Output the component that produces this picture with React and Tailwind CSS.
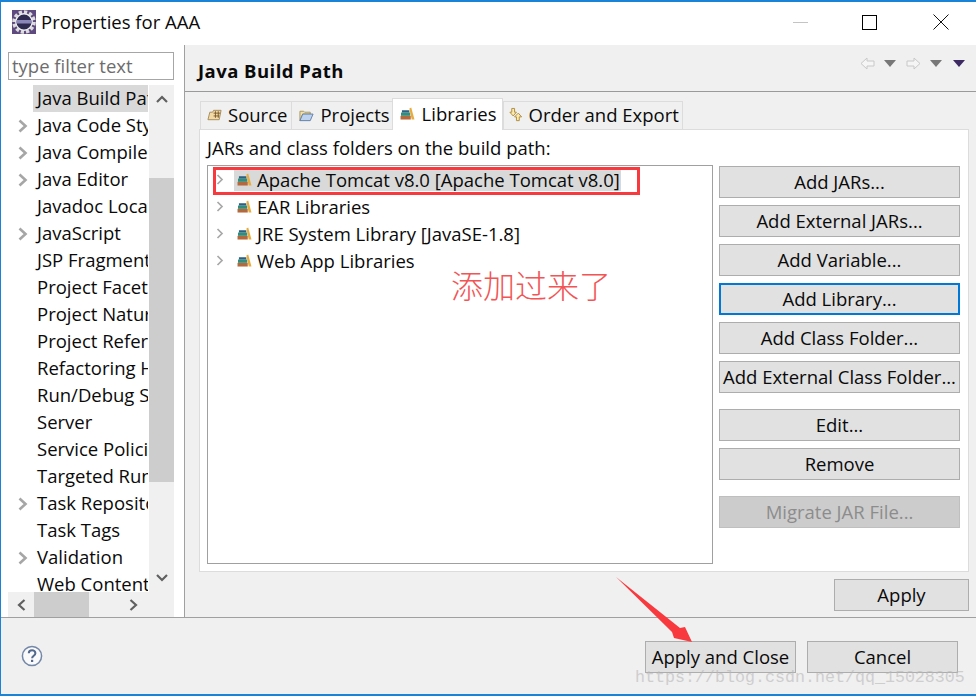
import React from "react";

const treeItems = [
  ["Java Build Path", false, true],
  ["Java Code Style", true],
  ["Java Compiler", true],
  ["Java Editor", true],
  ["Javadoc Location", false],
  ["JavaScript", true],
  ["JSP Fragment", false],
  ["Project Facets", false],
  ["Project Natures", false],
  ["Project References", false],
  ["Refactoring History", false],
  ["Run/Debug Settings", false],
  ["Server", false],
  ["Service Policies", false],
  ["Targeted Runtimes", false],
  ["Task Repository", true],
  ["Task Tags", false],
  ["Validation", true],
  ["Web Content Settings", false],
];

function Chevron({ small }) {
  return small ? (
    <svg width="8" height="11" viewBox="0 0 8 11"><path d="M1.5 1l4.5 4.5L1.5 10" fill="none" stroke="#a8a8a8" strokeWidth="1.7" /></svg>
  ) : (
    <svg width="10" height="14" viewBox="0 0 10 14"><path d="M1.5 1.5L7.5 7l-6 5.5" fill="none" stroke="#a6a6a6" strokeWidth="2.6" /></svg>
  );
}

function LibIcon() {
  return (
    <svg width="15" height="13" viewBox="0 0 16 14" className="shrink-0">
      <rect x="0.5" y="9.5" width="11" height="4" fill="#b5683c" />
      <rect x="1" y="6" width="10" height="3.5" fill="#2f8f7c" />
      <rect x="2" y="3.5" width="8" height="2.5" fill="#2c5f80" />
      <path d="M10 1.5l2-1 3.5 13H12.5z" fill="#e8ac3e" />
    </svg>
  );
}

function Btn({ children, focus, disabled, className = "" }) {
  const tone = focus
    ? "bg-[#e1e1e1] border-2 border-[#0078d7] "
    : disabled
      ? "bg-[#cccccc] border border-[#bfbfbf] text-[#8c8c8c] "
      : "bg-[#e1e1e1] border border-[#adadad] ";
  return (
    <div className={"h-[32px] flex items-center justify-center pb-px " + tone + className}>
      {children}
    </div>
  );
}

function ListRow({ label, selected }) {
  return (
    <div className="h-[27px] flex items-center">
      <div className="w-[26px] shrink-0 pl-[8px] flex items-center"><Chevron small /></div>
      <div className={"flex items-center pl-[3px] pr-[1px] " + (selected ? "h-[23px] bg-[#d9d9d9]" : "h-[27px]")}>
        <LibIcon />
        <span className="ml-[5px] whitespace-nowrap">{label}</span>
      </div>
    </div>
  );
}

function Tri({ color = "#777" }) {
  return (
    <svg width="12" height="7" viewBox="0 0 12 7"><path d="M0 0h12L6 7z" fill={color} /></svg>
  );
}

export default function App() {
  return (
    <div
      className="relative w-[976px] h-[696px] overflow-hidden bg-white border-t-2 border-l border-b-2 border-[#1883d7] flex flex-col text-[18.5px] text-[#0a0a0a]"
      style={{ fontFamily: "'Open Sans','Noto Sans',sans-serif" }}
    >
      {/* Title bar */}
      <div className="h-[43px] shrink-0 flex items-center bg-white pb-[3px]">
        <svg width="24" height="24" viewBox="0 0 24 24" className="ml-[11px]">
          <rect width="24" height="24" fill="#5f4a80" />
          <circle cx="12" cy="12" r="10" fill="none" stroke="#dcdcdc" strokeWidth="3.6" strokeDasharray="3.2 2" />
          <circle cx="12" cy="12" r="8.2" fill="#2e2a50" stroke="#eeeeee" strokeWidth="1.4" />
          <rect x="4.5" y="10" width="15" height="3.5" fill="#8b86b8" />
        </svg>
        <span className="ml-[5px]">Properties for AAA</span>
        <div className="ml-auto flex items-center">
          <div className="w-[15px] h-px bg-[#c4c4c4] mr-[54px]" />
          <div className="w-[15px] h-[15px] border border-black mr-[56px]" />
          <svg width="16" height="16" viewBox="0 0 16 16" className="mr-[27px]"><path d="M.5.5l15 15M15.5.5l-15 15" stroke="#111" strokeWidth="1" fill="none" /></svg>
        </div>
      </div>

      {/* Middle */}
      <div className="flex-1 min-h-0 flex">
        {/* Left */}
        <div className="w-[184px] shrink-0 border-r border-[#a0a0a0] pl-[7px] pr-[9px] pt-[7px] flex flex-col">
          <div className="h-[28px] w-[166px] shrink-0 border border-[#a6a6a6] flex items-center pl-[3px] pb-px text-[#6d6d6d]">type filter text</div>
          <div className="mt-[5px] flex h-[507px] shrink-0">
            <div className="w-[140px] mr-px overflow-hidden">
              {treeItems.map(([label, expandable, selected]) => (
                <div key={label} className="h-[27px] flex items-center">
                  <div className="w-[25px] shrink-0 pl-[10px] flex items-center">{expandable && <Chevron />}</div>
                  <div className={"h-[27px] flex-1 flex items-center pl-[4px] pb-[2px] whitespace-nowrap overflow-hidden " + (selected ? "bg-[#d9d9d9]" : "")}>{label}</div>
                </div>
              ))}
            </div>
            <div className="w-[25px] bg-[#f0f0f0] flex flex-col items-center">
              <svg width="12" height="8" viewBox="0 0 12 8" className="mt-[10px]"><path d="M1 7l5-5 5 5" fill="none" stroke="#606060" strokeWidth="2.2" /></svg>
              <div className="mt-[75px] w-full h-[304px] bg-[#cdcdcd]" />
              <svg width="12" height="8" viewBox="0 0 12 8" className="mt-[92px]"><path d="M1 1l5 5 5-5" fill="none" stroke="#606060" strokeWidth="2.2" /></svg>
            </div>
          </div>
          <div className="h-[25px] w-[166px] shrink-0 bg-[#f0f0f0] flex items-center">
            <svg width="9" height="12" viewBox="0 0 9 12" className="ml-[9px]"><path d="M7.5 1L2 6l5.5 5" fill="none" stroke="#606060" strokeWidth="2.2" /></svg>
            <div className="ml-[8px] w-[55px] h-[25px] bg-[#cdcdcd]" />
            <svg width="9" height="12" viewBox="0 0 9 12" className="ml-[40px]"><path d="M1.5 1L7 6l-5.5 5" fill="none" stroke="#606060" strokeWidth="2.2" /></svg>
          </div>
        </div>

        {/* Right */}
        <div className="flex-1 min-w-0 bg-[#f0f0f0] flex flex-col">
          <div className="h-[47px] shrink-0 border-b border-[#9a9a9a] flex items-center pl-[13px] pr-[11px]">
            <span className="font-bold mt-[6px] tracking-[0.45px]">Java Build Path</span>
            <div className="ml-auto flex items-center -mt-[10px]">
              <svg width="15" height="13" viewBox="0 0 15 13"><path d="M7 1L1 6.5 7 12V9h7V4H7z" fill="#f5f5f5" stroke="#c8c8c8" /></svg>
              <div className="ml-[9px] flex"><Tri /></div>
              <svg width="15" height="13" viewBox="0 0 15 13" className="ml-[10px]"><path d="M8 1l6 5.5L8 12V9H1V4h7z" fill="#f5f5f5" stroke="#c8c8c8" /></svg>
              <div className="ml-[9px] flex"><Tri /></div>
              <div className="ml-[11px] flex"><Tri color="#3d2a63" /></div>
            </div>
          </div>

          <div className="flex-1 min-h-0 pl-[14px] pr-[7px] pt-[7px] flex flex-col">
            {/* Tabs */}
            <div className="flex relative z-10 h-[31px] shrink-0 pl-px">
              <div className="h-[29px] mt-[2px] pl-[6px] pr-[4px] pb-px flex items-center gap-[6px] bg-[#f0f0f0] border border-[#dcdcdc]">
                <svg width="15" height="14" viewBox="0 0 16 14"><path d="M1 12l2-8h3l1-2h8l-2 10z" fill="#f3d9a4" stroke="#a58a5c" /><path d="M7 5h7M7 8h6M9 3v7M12 3v7" stroke="#7a5a2c" strokeWidth="1" /></svg>
                <span>Source</span>
              </div>
              <div className="h-[29px] mt-[2px] pl-[7px] pr-[2px] pb-px flex items-center gap-[6px] bg-[#f0f0f0] border border-l-0 border-[#dcdcdc]">
                <svg width="15" height="14" viewBox="0 0 16 14"><path d="M1 3h4l1 1h6v2H4l-3 7z" fill="#f2dfaa" stroke="#a8935c" /><path d="M4 6h11l-3 7H1z" fill="#bcd2ee" stroke="#5f7eaa" /></svg>
                <span>Projects</span>
              </div>
              <div className="h-[32px] -mt-px -ml-px pl-[7px] pr-[5px] pb-[2px] flex items-center gap-[7px] bg-white border border-b-0 border-[#dcdcdc]">
                <LibIcon />
                <span>Libraries</span>
              </div>
              <div className="h-[29px] mt-[2px] pl-[4px] pr-[3px] pb-px flex items-center gap-[6px] bg-[#f0f0f0] border border-[#dcdcdc]">
                <svg width="15" height="16" viewBox="0 0 16 16"><path d="M4 1h3v4h2L5.5 9 2 5h2z" fill="#fbe9ae" stroke="#b08a3c" /><path d="M11 6l3.5 4H12v4H9v-4H7z" fill="#fbe9ae" stroke="#b08a3c" /></svg>
                <span>Order and Export</span>
              </div>
            </div>

            {/* Tab panel */}
            <div className="h-[443px] shrink-0 -mt-px bg-white border border-[#dcdcdc] pl-[7px] pr-[7px] flex flex-col">
              <div className="h-[35px] shrink-0 flex items-center">JARs and class folders on the build path:</div>
              <div className="flex flex-1 min-h-0 pb-[7px]">
                <div className="w-[506px] shrink-0 border border-[#a0a0a0]">
                  <ListRow selected label="Apache Tomcat v8.0 [Apache Tomcat v8.0]" />
                  <ListRow label="EAR Libraries" />
                  <ListRow label="JRE System Library [JavaSE-1.8]" />
                  <ListRow label="Web App Libraries" />
                </div>
                <div className="ml-[6px] w-[241px] flex flex-col pt-px">
                  <div className="flex flex-col gap-[7px]">
                    <Btn>Add JARs...</Btn>
                    <Btn>Add External JARs...</Btn>
                    <Btn>Add Variable...</Btn>
                    <Btn focus>Add Library...</Btn>
                    <Btn>Add Class Folder...</Btn>
                    <Btn>Add External Class Folder...</Btn>
                  </div>
                  <div className="mt-[16px] flex flex-col gap-[7px]">
                    <Btn>Edit...</Btn>
                    <Btn>Remove</Btn>
                  </div>
                  <div className="mt-[16px]">
                    <Btn disabled>Migrate JAR File...</Btn>
                  </div>
                </div>
              </div>
            </div>

            <div className="mt-[7px] flex justify-end">
              <Btn className="w-[135px]">Apply</Btn>
            </div>
          </div>
        </div>
      </div>

      {/* Bottom */}
      <div className="h-[77px] shrink-0 border-t border-[#a0a0a0] bg-[#f0f0f0] flex items-center pl-[20px] pr-[18px]">
        <svg width="22" height="22" viewBox="0 0 22 22">
          <circle cx="11" cy="11" r="9.6" fill="#fafafa" stroke="#7387a8" strokeWidth="1.5" />
          <path d="M7.8 8.3c0-4.2 6.6-4.2 6.6 0 0 2.5-3.3 2.5-3.3 5" fill="none" stroke="#51688f" strokeWidth="2" />
          <rect x="10" y="14.8" width="2.2" height="2.2" fill="#51688f" />
        </svg>
        <div className="ml-auto flex gap-[11px] mt-[2px]">
          <Btn className="w-[151px]">Apply and Close</Btn>
          <Btn className="w-[151px]">Cancel</Btn>
        </div>
      </div>

      {/* Annotations */}
      <div className="absolute left-[212px] top-[165px] w-[427px] h-[28px] border-[3px] border-[#f83a3f]" />
      <div
        className="absolute left-[450px] top-[258px] text-[32px] text-[#f25555] font-light whitespace-nowrap"
        style={{ fontFamily: "'Noto Sans CJK SC',sans-serif" }}
      >
        添加过来了
      </div>
      <svg width="90" height="80" viewBox="0 0 90 80" className="absolute left-[609px] top-[573px]">
        <path d="M6 2L70 53l5-1 7 15-18-4-2-6z" fill="#f83a3f" />
      </svg>
      <div
        className="absolute left-[634px] top-[663px] text-[16.67px] text-[#b8b8b8] opacity-60 whitespace-nowrap"
        style={{ fontFamily: "'Liberation Mono',monospace" }}
      >
        https://blog.csdn.net/qq_15028305
      </div>
    </div>
  );
}
